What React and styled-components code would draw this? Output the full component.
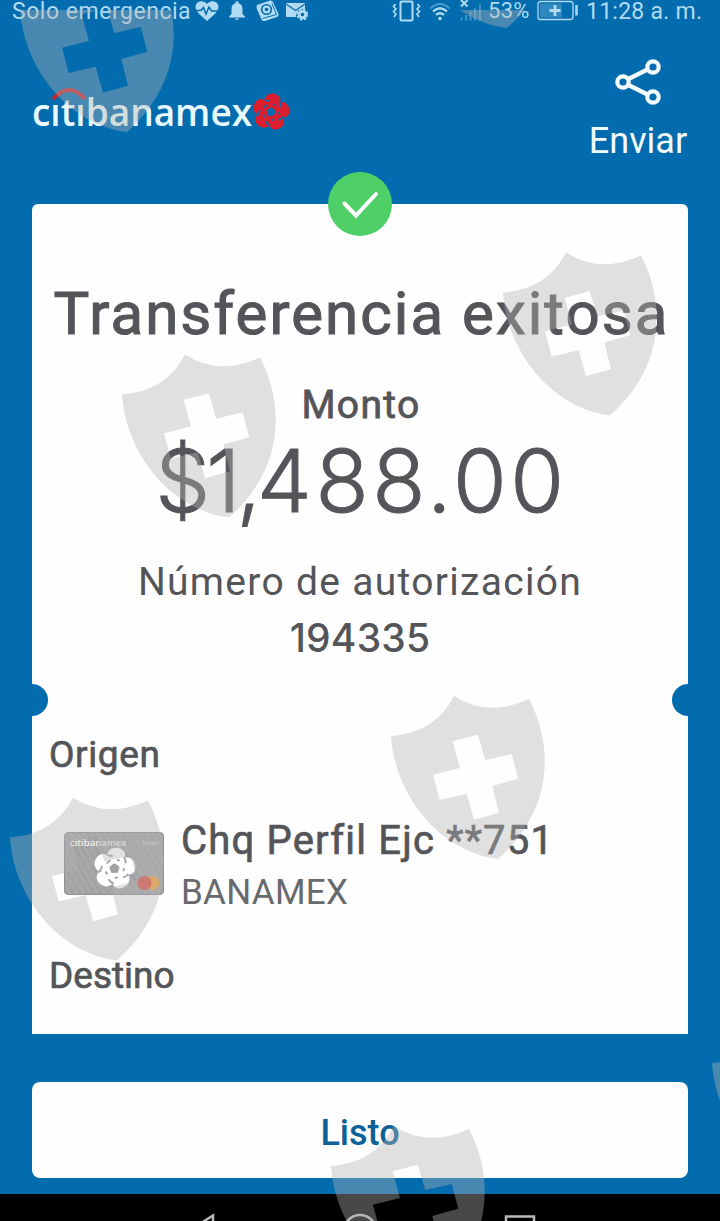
import React from "react";
import styled, { createGlobalStyle } from "styled-components";

const blue = "#036cae";
const ink = "#545559";
const pale = "#b0dbf2";

// top left corner of every shield
const marks = [
  [20, -31],
  [400, -135],
  [503, 252.5],
  [122, 354.5],
  [391, 696],
  [10, 797.5],
  [331, 1126],
  [712, 1023],
];

const petals = [0, 72, 144, 216, 288];

const Flower = ({ size, color, back }) => (
  <svg width={size} height={size} viewBox="-20 -20 40 40">
    {petals.map((r) => (
      <g key={r} transform={`rotate(${r + 8})`}>
        <path
          d="M-4 -3.500 L-8.500 -9 C-9.500 -16 -5 -19.500 0 -19.500 C6 -19.500 9.500 -15.500 7.500 -10 L4 -3.500Z"
          fill={color}
        />
        <path
          d="M-9 -10.500 Q-6 -12 -3 -11 M1 -8.500 Q3.500 -8.500 5 -6.500"
          fill="none"
          stroke={back}
          strokeWidth="1.700"
        />
      </g>
    ))}
    <path d="M0 -5 L4.800 -1.500 L3 4 H-3 L-4.800 -1.500Z" fill={back} />
  </svg>
);

const App = () => {
  return (
    <Screen>
      <GlobalStyle />
      <StatusBar>
        <Carrier>Solo emergencia</Carrier>
        <LeftIcons width="116" height="24" viewBox="192 0 116 24">
          <path d="M207 21 C200 15 195.500 11 195.500 7 C195.500 1 203 -1 207 4 C211 -1 218.500 1 218.500 7 C218.500 11 214 15 207 21Z" />
          <path
            d="M195 10.500 H201 L203.500 7.500 L206 14 L209 7 L211.500 11 H219"
            fill="none"
            stroke={blue}
            strokeWidth="1.500"
          />
          <path d="M229 17.500 V16.500 L231.500 14 V9 C231.500 5.500 233 4 235.500 3.300 V1.500 H238.500 V3.300 C241 4 242.500 5.500 242.500 9 V14 L245 16.500 V17.500Z M235 18.500 H239 Q237 21.500 235 18.500Z" />
          <path d="M257 5 L270 0.500 Q272 0 273 2 L278.500 14 Q279 16 277 17 L265 21 Q262.500 21.500 261.500 19.500 L256.500 8Z" />
          <path
            d="M272 3.500 L276.500 14.500 L262.500 18.500"
            fill="none"
            stroke={blue}
            strokeWidth="1"
          />
          <circle cx="266.500" cy="9.500" r="4.800" fill="none" stroke={blue} strokeWidth="1.600" />
          <circle cx="266.500" cy="9.500" r="1.800" fill={blue} />
          <path d="M286 3 H305 V9 L301 9 Q296 11 296 17 H286Z" />
          <path
            d="M286 4 L295.500 10.500 L305 4"
            fill="none"
            stroke={blue}
            strokeWidth="1.300"
          />
          <circle cx="302.500" cy="14.500" r="3.300" fill="none" stroke={pale} strokeWidth="3" />
          <circle
            cx="302.500"
            cy="14.500"
            r="5.300"
            fill="none"
            stroke={pale}
            strokeWidth="1.500"
            strokeDasharray="2.200 2"
          />
        </LeftIcons>
        <Spacer />
        <RightIcons width="98" height="24" viewBox="390 0 98 24">
          <rect x="400.500" y="1.500" width="12" height="19" rx="1" />
          <path
            d="M395.500 4 L393.500 6.500 L396 9 L393.500 11.500 L396 14 L394 17 M417.500 4 L419.500 6.500 L417 9 L419.500 11.500 L417 14 L419 17"
            strokeWidth="1.700"
          />
          <path d="M430.500 8.500 Q440 -0.500 449.500 8.500" strokeOpacity="0.450" />
          <path d="M433 11.500 Q440 5 447 11.500 M436 15 Q440 11.500 444 15" strokeWidth="2.300" />
          <circle cx="440" cy="18.500" r="1.800" fill={pale} stroke="none" />
          <path d="M461 0 L467.500 6.500 M467.500 0 L461 6.500" />
          <path
            d="M461.500 17.500 V20.500 M466 15 V20.500 M470.500 11.500 V20.500 M475 8 V20.500 M480 4 V20.500"
            strokeOpacity="0.350"
            strokeWidth="2.200"
          />
        </RightIcons>
        <Percent>53%</Percent>
        <Battery width="42" height="24" viewBox="537 0 42 24">
          <rect x="538" y="1.500" width="35" height="18" rx="2.500" />
          <rect x="540" y="3.500" width="22" height="14" fill={pale} fillOpacity="0.250" stroke="none" />
          <path d="M555 5 V16 M549.500 10.500 H560.500" strokeWidth="2.800" />
          <path d="M576.500 5 V15.500" strokeWidth="2.500" />
        </Battery>
        <Clock>11:28 a. m.</Clock>
      </StatusBar>
      <Header>
        <Brand>
          <BrandName>citibanamex</BrandName>
          <BrandArc width="42" height="18" viewBox="0 0 42 18">
            <path d="M2 8 H11 V16 H2Z M26 8 H36 V16 H26Z" fill={blue} />
            <path d="M3 12 Q19 -6 35 12" fill="none" stroke="#c9252f" strokeWidth="4" />
          </BrandArc>
          <Flower size={38} color="#dc1f2e" back={blue} />
        </Brand>
        <Share>
          <svg width="48" height="48" viewBox="0 0 48 48" fill="none" stroke="#f2fbff" strokeWidth="4.200">
            <circle cx="39" cy="9" r="5.700" />
            <circle cx="9" cy="24" r="5.700" />
            <circle cx="39" cy="39" r="5.700" />
            <path d="M14.500 21 L33.500 11.500 M14.500 27 L33.500 36.500" />
          </svg>
          <span>Enviar</span>
        </Share>
      </Header>
      <Receipt>
        <Badge>
          <svg width="40" height="32" viewBox="0 0 40 32">
            <path d="M4.500 15.500 L16 27.500 L36 6" fill="none" stroke="#fff" strokeWidth="4" strokeLinecap="round" />
          </svg>
        </Badge>
        <Notch $side="left" />
        <Notch $side="right" />
        <Title>Transferencia exitosa</Title>
        <Label>Monto</Label>
        <Amount>
          <Tight>$1,</Tight>488.00
        </Amount>
        <AuthLabel>Número de autorización</AuthLabel>
        <AuthCode>194335</AuthCode>
        <Section $top="71px">Origen</Section>
        <Account>
          <Card>
            <CardTop>
              <span>citibanamex</span>
              <small>Débito</small>
            </CardTop>
            <CardFlower>
              <Flower size={43} color="#fff" back="#a2a2a5" />
            </CardFlower>
            <CardCircles width="24" height="16" viewBox="0 0 24 16">
              <circle cx="15.500" cy="8" r="7" fill="#f0a53c" />
              <circle cx="7.500" cy="8" r="7" fill="#e5483c" fillOpacity="0.850" />
            </CardCircles>
          </Card>
          <div>
            <AccountName>Chq Perfil Ejc **751</AccountName>
            <BankName>BANAMEX</BankName>
          </div>
        </Account>
        <Section $top="39px" $spacing="0px">
          Destino
        </Section>
      </Receipt>
      <DoneButton>Listo</DoneButton>
      <NavBar>
        <svg width="340" height="27" viewBox="196 1194 340 27" fill="none" stroke="#b9b9b9" strokeWidth="2.500">
          <path d="M213 1230 V1215.500 L190 1230" />
          <circle cx="360" cy="1231" r="16" />
          <path d="M506 1230 V1216.500 H534 V1230" />
        </svg>
      </NavBar>
      <Overlay width="720" height="1211" viewBox="0 10 720 1211">
        {marks.map(([x, y]) => (
          <path
            key={`${x}-${y}`}
            transform={`translate(${x} ${y})`}
            fillRule="evenodd"
            d="M0 40 Q44 37 63 0 Q97 22 138 3 C161 46 165 112 107 163 C50 156 4 101 0 40Z M61.700 45.300 L86.700 38.700 L94.300 64 L120.700 58 L127.300 82.700 L101.300 90 L108 116.700 L83 123.700 L75.700 97.700 L48.700 104 L42 78.700 L69 72Z"
          />
        ))}
      </Overlay>
    </Screen>
  );
};

export default App;

const GlobalStyle = createGlobalStyle`
  body {
    margin: 0;
  }
  * {
    box-sizing: border-box;
  }
`;

const Screen = styled.div`
  width: 720px;
  height: 1221px;
  display: flex;
  flex-direction: column;
  background: ${blue};
  position: relative;
  white-space: nowrap;
  font-family: Roboto, "Liberation Sans", sans-serif;
`;

const StatusBar = styled.div`
  display: flex;
  height: 24px;
  padding: 0 16px 0 12px;
  color: ${pale};
  line-height: 24px;
  svg {
    flex: none;
  }
`;

const Carrier = styled.span`
  width: 180px;
  font-size: 23px;
  letter-spacing: 0.52px;
`;

const Percent = styled.span`
  width: 49px;
  font-size: 22px;
  line-height: 22px;
  letter-spacing: 0.3px;
`;

const Clock = styled.span`
  width: 125px;
  padding-left: 7px;
  font-size: 23px;
  letter-spacing: 0.25px;
`;

const LeftIcons = styled.svg`
  fill: ${pale};
`;

const RightIcons = styled.svg`
  fill: none;
  stroke: ${pale};
  stroke-width: 2;
`;

const Battery = styled.svg`
  fill: none;
  stroke: ${pale};
  stroke-width: 1.3;
`;

const Spacer = styled.div`
  flex: 1;
`;

const Header = styled.div`
  height: 180px;
  padding: 34px 32px 0;
  display: flex;
  justify-content: space-between;
`;

const Brand = styled.div`
  display: flex;
  align-items: center;
  height: 38px;
  margin-top: 35px;
  position: relative;
`;

const BrandName = styled.div`
  width: 220px;
  color: #e8faff;
  font-family: "Open Sans", sans-serif;
  font-size: 37px;
  font-weight: 600;
  line-height: 38px;
`;

const BrandArc = styled.svg`
  position: absolute;
  left: 18px;
  top: -6px;
`;

const Share = styled.div`
  display: flex;
  flex-direction: column;
  align-items: center;
  width: 100px;
  color: #f2fbff;
  font-size: 36px;
  line-height: 42px;
  svg {
    margin-bottom: 14px;
  }
`;

const Receipt = styled.div`
  position: relative;
  display: flex;
  flex-direction: column;
  align-items: center;
  height: 830px;
  margin: 0 32px;
  padding: 75px 17px 0;
  background: #fefefe;
  border-radius: 6px 6px 0 0;
  color: ${ink};
`;

const Badge = styled.div`
  position: absolute;
  top: -32px;
  left: 296px;
  width: 64px;
  height: 64px;
  display: flex;
  align-items: center;
  justify-content: center;
  border-radius: 50%;
  background: #4fcf67;
`;

const Notch = styled.div`
  position: absolute;
  top: 480px;
  ${(p) => p.$side}: -16px;
  width: 32px;
  height: 32px;
  border-radius: 50%;
  background: ${blue};
`;

const Title = styled.div`
  padding-left: 3px;
  font-size: 60px;
  line-height: 70px;
  letter-spacing: 2.05px;
  -webkit-text-stroke: 1.1px ${ink};
`;

const Label = styled.div`
  padding-left: 2px;
  margin-top: 32px;
  font-size: 39px;
  line-height: 48px;
  letter-spacing: 1.3px;
  -webkit-text-stroke: 0.8px ${ink};
`;

const Amount = styled.div`
  margin-top: 8px;
  padding-left: 3px;
  font-family: Inter, sans-serif;
  font-size: 87px;
  font-weight: 300;
  line-height: 88px;
  letter-spacing: 3.6px;
  -webkit-text-stroke: 1px ${ink};
`;

const Tight = styled.span`
  letter-spacing: -4px;
`;

const AuthLabel = styled.div`
  margin-top: 34px;
  font-size: 39px;
  line-height: 46px;
  letter-spacing: 1.3px;
`;

const AuthCode = styled.div`
  margin-top: 10px;
  font-family: Inter, sans-serif;
  font-size: 39px;
  font-weight: 500;
  line-height: 46px;
  letter-spacing: 0.2px;
`;

const Section = styled.div`
  align-self: flex-start;
  margin-top: ${(p) => p.$top};
  font-size: 37px;
  line-height: 46px;
  letter-spacing: ${(p) => p.$spacing || "0.6px"};
  -webkit-text-stroke: 0.7px ${ink};
`;

const Account = styled.div`
  align-self: flex-start;
  display: flex;
  margin-top: 39px;
  padding-left: 15px;
`;

const Card = styled.div`
  position: relative;
  width: 100px;
  height: 63px;
  margin: 15px 17px 0 0;
  border: 1px solid #8f8f92;
  border-radius: 4px;
  background: repeating-linear-gradient(60deg, #a2a2a5 0 3px, #a8a8ab 3px 6px);
`;

const CardTop = styled.div`
  display: flex;
  justify-content: space-between;
  padding: 4px 5px;
  color: #eee;
  font: 600 9.5px/12px "Open Sans", sans-serif;
  small {
    font-size: 5px;
    color: #d0d0d0;
  }
`;

const CardFlower = styled.div`
  position: absolute;
  left: 28px;
  top: 14px;
`;

const CardCircles = styled.svg`
  position: absolute;
  right: 2px;
  bottom: 3px;
`;

const AccountName = styled.div`
  font-size: 40px;
  line-height: 48px;
  letter-spacing: 1.2px;
  -webkit-text-stroke: 0.7px ${ink};
`;

const BankName = styled.div`
  margin-top: 7px;
  font-size: 35px;
  line-height: 42px;
  letter-spacing: 0.3px;
  color: #68696c;
`;

const DoneButton = styled.button`
  height: 96px;
  margin: 48px 32px 16px;
  padding: 6px 0 0;
  border: none;
  border-radius: 8px;
  background: #fefefe;
  color: #0b6298;
  font-family: inherit;
  font-size: 36px;
  font-weight: 500;
`;

const NavBar = styled.div`
  display: flex;
  height: 27px;
  padding-left: 196px;
  background: #000;
`;

const Overlay = styled.svg`
  position: absolute;
  top: 10px;
  left: 0;
  fill: rgba(180, 180, 180, 0.4);
  pointer-events: none;
`;
